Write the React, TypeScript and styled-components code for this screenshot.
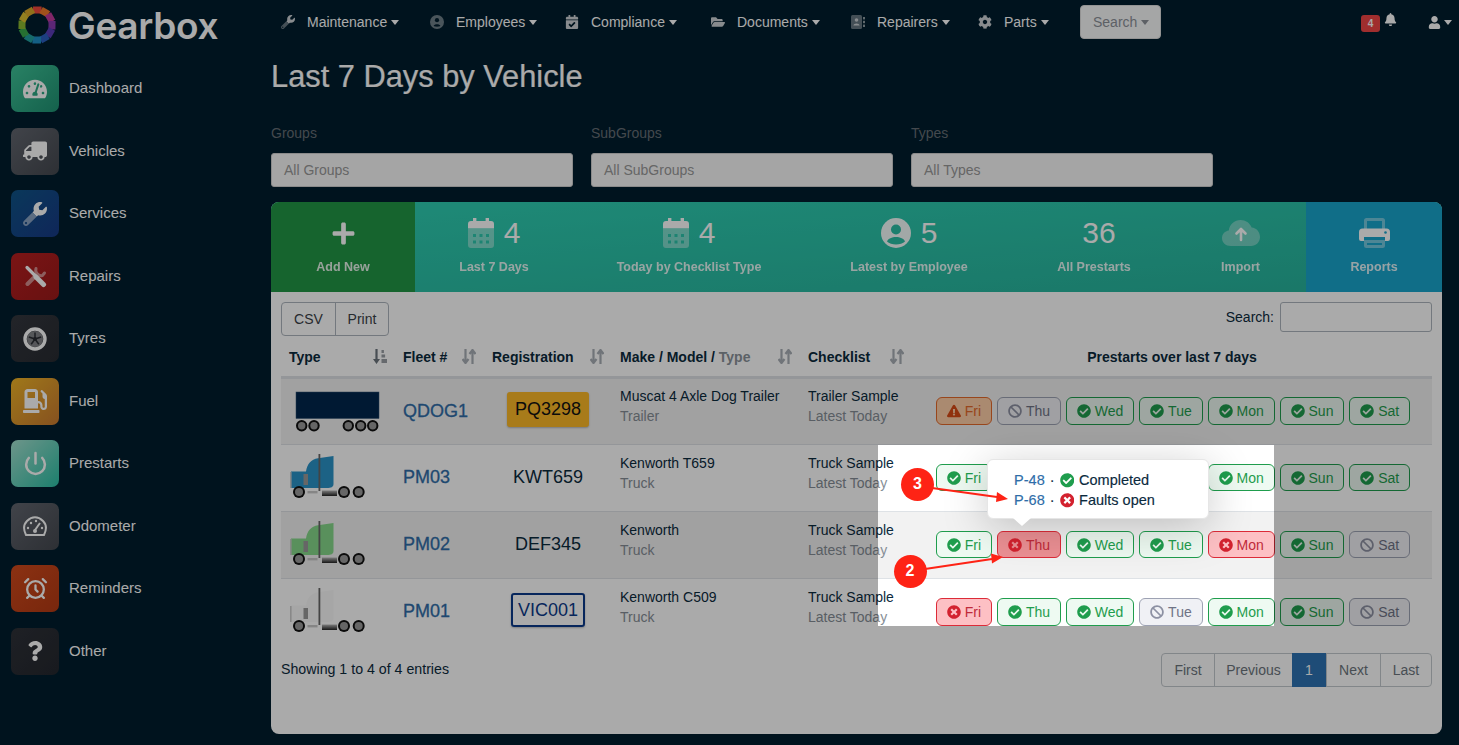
import React from 'react';
import styled, { createGlobalStyle } from 'styled-components';
import {
  FaTachometerAlt,
  FaTruck,
  FaWrench,
  FaGasPump,
  FaQuestion,
  FaCalendarCheck,
  FaFolderOpen,
  FaCog,
  FaBell,
  FaUser,
  FaPlus,
  FaCheckCircle,
  FaTimesCircle,
  FaBan,
  FaExclamationTriangle,
} from 'react-icons/fa';
import { AlarmClock, Power } from 'lucide-react';

const GlobalStyle = createGlobalStyle`
  html, body {
    margin: 0;
    padding: 0;
    background: #001d2d;
    font-family: "Liberation Sans", Arial, sans-serif;
    font-size: 14px;
    color: #0b2a3d;
  }
  * { box-sizing: border-box; }
`;

const Page = styled.div`
  position: relative;
  display: flex;
  width: 1459px;
  height: 745px;
  overflow: hidden;
  background: #001d2d;
`;

/* sidebar */
const Sidebar = styled.aside`
  flex: 0 0 271px;
  padding-left: 11px;
`;

const Brand = styled.div`
  display: flex;
  align-items: center;
  gap: 11px;
  height: 65px;
  padding: 0 0 15px 6px;
`;

const BrandName = styled.span`
  font-family: "Inter", "Open Sans", sans-serif;
  font-size: 37px;
  font-weight: 600;
  letter-spacing: -0.3px;
  color: #fff;
`;

const Menu = styled.nav`
  display: flex;
  flex-direction: column;
  gap: 15.5px;
`;

const MenuItem = styled.a`
  display: flex;
  align-items: center;
  gap: 10px;
  height: 47px;
  padding-bottom: 2px;
  font-size: 15px;
  color: #fff;
`;

const MenuIcon = styled.span<{ $from: string; $to: string }>`
  display: flex;
  align-items: center;
  justify-content: center;
  flex: 0 0 48px;
  height: 47px;
  margin-bottom: -2px;
  border-radius: 7px;
  color: #fff;
  font-size: 24px;
  background: linear-gradient(135deg, ${p => p.$from}, ${p => p.$to});
`;

const Faded = styled.span`
  display: inline-flex;
  mask-image: linear-gradient(45deg, rgba(0, 0, 0, 0.5) 48%, #000 48%);
`;

const Flipped = styled.span`
  display: inline-flex;
  transform: scaleX(-1);
`;

/* main */
const Main = styled.main`
  flex: 1;
  min-width: 0;
`;

const Topbar = styled.header`
  display: flex;
  align-items: center;
  height: 44px;
  padding: 0 7px 0 10px;
  color: #fff;
`;

const NavGrid = styled.div`
  display: grid;
  grid-template-columns: 149px 135px 146px 140px 127px 102px 81px;
  align-items: center;
`;

const NavItem = styled.a`
  display: flex;
  align-items: center;
  gap: 12px;
  font-size: 14px;
  color: #fff;
`;

const NavIcon = styled.span`
  display: flex;
  justify-content: center;
  width: 14px;
  font-size: 14px;
  color: #fff;
  opacity: 0.8;
`;

const Caret = styled.i`
  display: inline-block;
  margin-left: 4px;
  vertical-align: 2px;
  border-top: 5px solid currentColor;
  border-left: 4.5px solid transparent;
  border-right: 4.5px solid transparent;
`;

const SearchButton = styled.button`
  display: flex;
  align-items: center;
  width: 81px;
  height: 34px;
  padding: 0 12px;
  font: inherit;
  font-size: 14px;
  color: #8c9198;
  background: #f8f9fa;
  border: 1px solid #ddd;
  border-radius: 4px;
`;

const TopRight = styled.div`
  display: flex;
  align-items: center;
  margin-left: auto;
`;

const Badge = styled.span`
  display: flex;
  align-items: center;
  justify-content: center;
  width: 19px;
  height: 17px;
  margin-top: 3px;
  border-radius: 3px;
  font-size: 10px;
  font-weight: bold;
  color: #fff;
  background: #f04545;
`;

const BellIcon = styled.span`
  display: flex;
  margin: -6px 31px 0 4px;
  font-size: 13px;
`;

const Content = styled.div`
  margin-right: 17px;
`;

const Title = styled.h1`
  margin: 15px 0 0;
  font-size: 30.8px;
  font-weight: normal;
  line-height: 36px;
  color: #fff;
  -webkit-text-stroke: 0.2px #fff;
`;

const Filters = styled.div`
  display: grid;
  grid-template-columns: repeat(3, 302px);
  gap: 18px;
  margin-top: 28px;
`;

const FilterLabel = styled.label`
  display: block;
  margin-bottom: 9px;
  font-size: 14px;
  line-height: 21px;
  color: #666e75;
`;

const FilterBox = styled.div`
  display: flex;
  align-items: center;
  height: 34px;
  padding: 0 12px;
  font-size: 14px;
  color: #999;
  background: #f8f8f8;
  border: 1px solid #d0d0d0;
  border-radius: 3px;
`;

const Card = styled.section`
  height: 532px;
  margin-top: 15px;
  overflow: hidden;
  background: #fff;
  border-radius: 8px;
`;

const Tiles = styled.div`
  display: grid;
  grid-template-columns: 144px 158px 232px 208px 162px 131px 136px;
  height: 90px;
  background: linear-gradient(175deg, #2ed0b4, #27b29b);
`;

const Tile = styled.a<{ $bg?: string }>`
  display: flex;
  flex-direction: column;
  align-items: center;
  padding-top: 16px;
  color: #fff;
  background: ${p => p.$bg || 'transparent'};
`;

const TileTop = styled.div`
  display: flex;
  align-items: center;
  justify-content: center;
  gap: 10px;
  height: 30px;
`;

const TileNumber = styled.span<{ $nudge?: number }>`
  margin-left: ${p => p.$nudge || 0}px;
  font-size: 30px;
  line-height: 30px;
`;

const TileLabel = styled.span`
  margin-top: 11px;
  font-size: 12.5px;
  font-weight: bold;
  line-height: 16px;
  opacity: 0.88;
`;

const CardBody = styled.div`
  padding: 10px;
`;

const Toolbar = styled.div`
  display: flex;
  justify-content: space-between;
  align-items: flex-start;
  height: 36px;
`;

const ButtonGroup = styled.div`
  display: flex;
  height: 34px;
  border: 1px solid #adb5bd;
  border-radius: 4px;
`;

const GroupButton = styled.button`
  width: 53px;
  padding: 0;
  font: inherit;
  font-size: 14px;
  color: #3b4147;
  background: transparent;
  border: 0;
  & + & { border-left: 1px solid #adb5bd; }
`;

const SearchLabel = styled.label`
  display: flex;
  align-items: center;
  gap: 6px;
  font-size: 14px;
`;

const SearchInput = styled.div`
  width: 152px;
  height: 30px;
  border: 1px solid #adb5bd;
  border-radius: 3px;
`;

const Table = styled.table`
  width: 1151px;
  table-layout: fixed;
  border-collapse: collapse;
`;

const HeadCell = styled.th<{ $center?: boolean }>`
  height: 39px;
  padding: 0 8px;
  font-size: 14px;
  text-align: ${p => (p.$center ? 'center' : 'left')};
  border-bottom: 3px solid #dee2e6;
`;

const HeadInner = styled.div`
  display: flex;
  align-items: center;
  justify-content: space-between;
`;

const Muted = styled.span`
  color: #8a929a;
`;

const Row = styled.tr<{ $striped?: boolean }>`
  height: 67px;
  background: ${p => (p.$striped ? 'rgba(0, 0, 0, 0.05)' : 'transparent')};
  border-bottom: 1px solid #dee2e6;
  &:last-child { border-bottom: 0; }
`;

const Cell = styled.td`
  padding: 0 8px;
  vertical-align: middle;
`;

const TypeCell = styled(Cell)`
  padding: 0 0 0 8px;
  & > svg { display: block; }
`;

const PlateCell = styled(Cell)`
  padding: 0;
  text-align: center;
`;

const FleetLink = styled.a`
  font-size: 18px;
  color: #2f6da8;
  -webkit-text-stroke: 0.3px #2f6da8;
`;

const Plate = styled.span<{ $variant?: 'yellow' | 'vic' }>`
  display: inline-block;
  margin-bottom: ${p => (p.$variant ? '4px' : '0')};
  font-size: 18px;
  line-height: ${p => (p.$variant === 'yellow' ? '31px' : p.$variant === 'vic' ? '30px' : '35px')};
  padding: 0 ${p => (p.$variant === 'yellow' ? '6px' : '5px')};
  border-radius: 3px;
  color: ${p => (p.$variant === 'vic' ? '#0b3a8a' : p.$variant === 'yellow' ? '#111' : '#0b2a3d')};
  background: ${p => (p.$variant === 'yellow' ? '#fcb927' : 'transparent')};
  border: ${p => (p.$variant === 'vic' ? '2px solid #0b3a8a' : p.$variant === 'yellow' ? '2px solid #fcb927' : '0')};
  box-shadow: ${p => (p.$variant ? '0 1px 2px rgba(0, 0, 0, 0.25)' : 'none')};
`;

const TwoLine = styled.div`
  margin-bottom: 10px;
  line-height: 20px;
  font-size: 14px;
  white-space: nowrap;
`;

const SubLine = styled.div`
  color: #868e96;
`;

const Pills = styled.div`
  display: flex;
  justify-content: center;
  gap: 5.2px;
  margin-left: 2px;
`;

type Status = 'ok' | 'fault' | 'off' | 'warn';

const pillColors: Record<Status, { bg: string; border: string; text: string; icon: string }> = {
  ok: { bg: '#eefaf2', border: '#1f9d4d', text: '#1f9d4d', icon: '#1f9d4d' },
  fault: { bg: '#fdc0c4', border: '#dc2b38', text: '#c02b3a', icon: '#d3222f' },
  off: { bg: '#f0f1f5', border: '#9da2b3', text: '#6f7385', icon: '#8d91a3' },
  warn: { bg: '#ffcfa8', border: '#e5692a', text: '#e5692a', icon: '#d94a16' },
};

const Pill = styled.span<{ $status: Status; $active?: boolean }>`
  position: relative;
  display: inline-flex;
  align-items: center;
  gap: 4px;
  height: 27.5px;
  padding: 0 9.8px;
  font-size: 14px;
  border-radius: 6px;
  color: ${p => pillColors[p.$status].text};
  background: ${p => (p.$active ? '#ec9094' : pillColors[p.$status].bg)};
  border: 1px solid ${p => pillColors[p.$status].border};
  & > svg { color: ${p => pillColors[p.$status].icon}; font-size: 14px; }
`;

const Tooltip = styled.div`
  position: absolute;
  left: -11px;
  bottom: 38px;
  z-index: 2;
  width: 222px;
  height: 60px;
  padding: 10px 0 0 26px;
  color: #0b2a3d;
  background: #fff;
  border: 1px solid #e6e6e6;
  border-radius: 6px;
  box-shadow: 0 8px 45px rgba(0, 0, 0, 0.22);
  &::after {
    content: '';
    position: absolute;
    left: 25px;
    top: 100%;
    border-top: 8px solid #fff;
    border-left: 9px solid transparent;
    border-right: 9px solid transparent;
  }
`;

const TipLine = styled.div`
  display: flex;
  align-items: center;
  gap: 5px;
  height: 20px;
  font-size: 14.5px;
  white-space: nowrap;
  -webkit-text-stroke: 0.15px currentColor;
  & > a { color: #2f6da8; }
`;

const Foot = styled.div`
  display: flex;
  justify-content: space-between;
  align-items: center;
  margin-top: 8px;
  font-size: 14px;
`;

const Entries = styled.span`
  padding-bottom: 2px;
  font-size: 14.2px;
`;

const Pager = styled.div`
  display: flex;
  height: 34px;
  border: 1px solid #c4c9ce;
  border-radius: 4px;
`;

const PageLink = styled.a<{ $active?: boolean; $w: number }>`
  display: flex;
  align-items: center;
  justify-content: center;
  width: ${p => p.$w}px;
  margin: ${p => (p.$active ? '-1px 0' : '0')};
  color: ${p => (p.$active ? '#fff' : '#6c757d')};
  background: ${p => (p.$active ? '#2d73b3' : 'transparent')};
  border-left: ${p => (p.$active ? '0' : '1px solid #c4c9ce')};
  &:first-child { border-left: 0; }
`;

/* dimmed page with a lit window, and the numbered callouts on top of it */
const Spotlight = styled.div`
  position: absolute;
  left: 878px;
  top: 445px;
  width: 396px;
  height: 181px;
  z-index: 5;
  pointer-events: none;
  box-shadow: 0 0 0 2000px rgba(0, 0, 0, 0.335);
`;

const Callouts = styled.svg`
  position: absolute;
  left: 0;
  top: 0;
  z-index: 6;
  pointer-events: none;
`;

const Marker = styled.span<{ $x: number; $y: number }>`
  position: absolute;
  left: ${p => p.$x - 16.5}px;
  top: ${p => p.$y - 16.5}px;
  z-index: 7;
  display: flex;
  align-items: center;
  justify-content: center;
  width: 33px;
  height: 33px;
  border-radius: 50%;
  font-size: 16px;
  font-weight: bold;
  color: #fff;
  background: #fe2315;
`;

const Logo = () => {
  const colors = ['#f0483c', '#f07a2a', '#c03a9c', '#8a3ab0', '#5a3db8', '#2a5fc0', '#1f8fc8', '#22a0a0', '#3aa84c', '#8ab830', '#dcc030', '#d8a82a'];
  return (
    <svg width="40" height="40" viewBox="-20 -20 40 40">
      {colors.map((c, i) => {
        const a0 = ((i * 30 - 105) * Math.PI) / 180;
        const a1 = ((i * 30 - 73) * Math.PI) / 180;
        const r = 15.6;
        return (
          <path
            key={i}
            d={`M${r * Math.cos(a0)} ${r * Math.sin(a0)} L${r * Math.cos(a1)} ${r * Math.sin(a1)}`}
            stroke={c}
            strokeWidth="7"
            fill="none"
          />
        );
      })}
    </svg>
  );
};

const RepairsIcon = () => (
  <svg width="24" height="24" viewBox="0 0 24 24" fill="none" stroke="#fff" strokeLinecap="round">
    <g opacity="0.5">
      <path d="M4.5 20 L14 10.5" strokeWidth="4" />
      <path d="M13 4.5 A5.5 5.5 0 0 0 19.5 11.5 L21.5 9" strokeWidth="3" />
    </g>
    <path d="M4 3.5 L12 11.5" strokeWidth="3.2" />
    <path d="M13 13 L20.5 20.5" strokeWidth="5" />
  </svg>
);

const TyreIcon = () => (
  <svg width="24" height="24" viewBox="0 0 24 24">
    <circle cx="12" cy="12" r="10" fill="none" stroke="#fff" strokeWidth="3.4" />
    <circle cx="12" cy="12" r="8" fill="#fff" opacity="0.4" />
    <circle cx="12" cy="12" r="2" fill="#2a2d33" />
    {[0, 72, 144, 216, 288].map(a => (
      <path key={a} d="M12 12 V5.5" stroke="#2a2d33" strokeWidth="1.5" transform={`rotate(${a} 12 12)`} />
    ))}
  </svg>
);

const OdometerIcon = () => (
  <svg width="26" height="22" viewBox="0 0 26 22" fill="none" stroke="#fff" strokeWidth="2">
    <path d="M4 20 C1 14 1 10 5 6 C10 1 16 1 21 6 C25 10 25 14 22 20 Z" strokeLinejoin="round" />
    <path d="M13 15 L18 8" />
    <circle cx="13" cy="16" r="2" fill="#fff" stroke="none" />
    <circle cx="6" cy="13" r="1.2" fill="#fff" stroke="none" />
    <circle cx="9" cy="8" r="1.2" fill="#fff" stroke="none" />
    <circle cx="14" cy="6" r="1.2" fill="#fff" stroke="none" />
    <circle cx="20" cy="13" r="1.2" fill="#fff" stroke="none" />
  </svg>
);

const EmployeeNavIcon = () => (
  <svg width="14" height="14" viewBox="0 0 14 14">
    <circle cx="7" cy="7" r="7" fill="#fff" opacity="0.55" />
    <circle cx="7" cy="5.2" r="2.1" fill="#001d2d" />
    <path d="M3.6 10.8 C4.2 8.6 9.8 8.6 10.4 10.8 C9 12 5 12 3.6 10.8 Z" fill="#001d2d" />
  </svg>
);

const RepairersNavIcon = () => (
  <svg width="14" height="14" viewBox="0 0 14 14" fill="#fff">
    <rect x="0" y="0" width="11" height="14" rx="1.5" opacity="0.5" />
    <circle cx="5.5" cy="5" r="1.8" />
    <path d="M2.4 10.5 C2.6 7.8 8.4 7.8 8.6 10.5 Z" />
    <rect x="12" y="2" width="2" height="2.4" opacity="0.7" />
    <rect x="12" y="5.8" width="2" height="2.4" opacity="0.7" />
    <rect x="12" y="9.6" width="2" height="2.4" opacity="0.7" />
  </svg>
);

const CalendarIcon = () => {
  const holes: string[] = [];
  [16, 22.5].forEach(y => {
    [5, 11.5, 18].forEach(x => {
      holes.push(`M${x} ${y}h3v3h-3z`);
    });
  });
  return (
    <svg width="26" height="30" viewBox="0 0 26 30" fill="#fff">
      <path d="M5 0h3.4v3H17.6V0H21v3h2a3 3 0 0 1 3 3v4.5H0V6a3 3 0 0 1 3-3h2z" />
      <path
        fillRule="evenodd"
        opacity="0.4"
        d={`M0 11h26v16a3 3 0 0 1-3 3H3a3 3 0 0 1-3-3z${holes.join('')}`}
      />
    </svg>
  );
};

const PersonCircleIcon = () => (
  <svg width="30" height="30" viewBox="0 0 30 30">
    <circle cx="15" cy="15" r="15" fill="#fff" opacity="0.95" />
    <circle cx="15" cy="11.5" r="5" fill="#2bbfa5" />
    <path d="M6 23.5 C8 17.5 22 17.5 24 23.5 C20 27.5 10 27.5 6 23.5 Z" fill="#2bbfa5" />
  </svg>
);

const CloudIcon = () => (
  <svg width="38" height="26" viewBox="0 0 38 26">
    <path
      fill="#fff"
      opacity="0.35"
      d="M9 26 C3.5 26 0 22.5 0 18 C0 14 3 11 6.8 10.4 C7.5 4.5 12.5 0 18.6 0 C23.6 0 27.8 3 29.6 7.4 C34.5 7.8 38 11.8 38 17 C38 22 34 26 29 26 Z"
    />
    <path
      d="M19 20 V9 M14.5 13.5 L19 9 L23.5 13.5"
      fill="none"
      stroke="#fff"
      strokeWidth="2.6"
      strokeLinecap="round"
      strokeLinejoin="round"
    />
  </svg>
);

const PrinterIcon = () => (
  <svg width="31" height="30" viewBox="0 0 31 30">
    <path
      fill="#fff"
      opacity="0.4"
      d="M5 2.5 A2.5 2.5 0 0 1 7.5 0 H23.5 A2.5 2.5 0 0 1 26 2.5 V11 H23 V3 H8 V11 H5 Z M5 22 H26 V27.5 A2.5 2.5 0 0 1 23.5 30 H7.5 A2.5 2.5 0 0 1 5 27.5 Z M8 25 V27 H23 V25 Z"
    />
    <path
      fill="#fff"
      d="M3.5 10.5 H27.5 A3.5 3.5 0 0 1 31 14 V21 A2 2 0 0 1 29 23 H26 V19 H5 V23 H2 A2 2 0 0 1 0 21 V14 A3.5 3.5 0 0 1 3.5 10.5 Z"
    />
    <circle cx="26.5" cy="14.5" r="1.3" fill="#18a5cc" />
  </svg>
);

const SortIcon = () => (
  <svg width="14" height="15" viewBox="0 0 14 15" fill="none" stroke="#a9afb6" strokeWidth="2.2">
    <path d="M3.5 0 V13 M0.5 10 L3.5 14 L6.5 10" />
    <path d="M10.5 15 V2 M7.5 5 L10.5 1 L13.5 5" />
  </svg>
);

const SortActiveIcon = () => (
  <svg width="14" height="15" viewBox="0 0 14 15" fill="#6d757d">
    <path d="M2.4 0 H4.6 V10 H7 L3.5 15 L0 10 H2.4 Z" />
    <rect x="8.5" y="1" width="2.4" height="3" opacity="0.7" />
    <rect x="8.5" y="5.5" width="3.6" height="3" opacity="0.7" />
    <rect x="8.5" y="10" width="5.5" height="4" opacity="0.7" />
  </svg>
);

const Wheel = ({ x, y, r = 6 }: { x: number; y: number; r?: number }) => (
  <g>
    <circle cx={x} cy={y} r={r} fill="#111" />
    <circle cx={x} cy={y} r={r - 2} fill="#9a9a9a" />
  </g>
);

const TrailerImage = () => (
  <svg width="96" height="50" viewBox="0 0 96 50">
    <rect x="7" y="6" width="83" height="26.5" fill="#00264d" stroke="#3a5a7a" strokeWidth="0.5" />
    {[12.7, 25, 59.3, 71.7, 83.7].map(x => (
      <Wheel key={x} x={x} y={39.7} r={5.7} />
    ))}
  </svg>
);

const TruckImage = ({ color }: { color: string }) => (
  <svg width="96" height="50" viewBox="0 0 96 50">
    <defs>
      <linearGradient id="tank" x1="0" y1="0" x2="0" y2="1">
        <stop offset="0" stopColor="#bbb" />
        <stop offset="1" stopColor="#222" />
      </linearGradient>
    </defs>
    <path d="M2 18.5 H17 C18 11 22 6.5 29 5.3 L44.5 3 V31 C44.5 34 42 35 38 35 H2 Z" fill={color} />
    <rect x="1" y="19" width="1.6" height="16" fill="#ccc" />
    <rect x="14.5" y="21" width="4.5" height="11" fill="#999" />
    <rect x="29.5" y="1" width="1.8" height="37" fill="#666" />
    <rect x="18.5" y="38" width="10" height="2.4" fill="#c8c8c8" />
    <rect x="33" y="37.5" width="15" height="5.5" fill="url(#tank)" />
    <Wheel x={10} y={39} />
    <Wheel x={55} y={39} />
    <Wheel x={69.7} y={39} />
  </svg>
);

type Day = { day: string; status: Status };

const days = ['Fri', 'Thu', 'Wed', 'Tue', 'Mon', 'Sun', 'Sat'];
const build = (s: Status[]): Day[] => s.map((status, i) => ({ day: days[i], status }));

const rows = [
  {
    image: <TrailerImage />,
    fleet: 'QDOG1',
    plate: 'PQ3298',
    variant: 'yellow' as const,
    make: 'Muscat 4 Axle Dog Trailer',
    kind: 'Trailer',
    checklist: 'Trailer Sample',
    pills: build(['warn', 'off', 'ok', 'ok', 'ok', 'ok', 'ok']),
  },
  {
    image: <TruckImage color="#2a93c8" />,
    fleet: 'PM03',
    plate: 'KWT659',
    make: 'Kenworth T659',
    kind: 'Truck',
    checklist: 'Truck Sample',
    pills: build(['ok', 'ok', 'ok', 'ok', 'ok', 'ok', 'ok']),
  },
  {
    image: <TruckImage color="#86d98b" />,
    fleet: 'PM02',
    plate: 'DEF345',
    make: 'Kenworth',
    kind: 'Truck',
    checklist: 'Truck Sample',
    pills: build(['ok', 'fault', 'ok', 'ok', 'fault', 'ok', 'off']),
    tip: true,
  },
  {
    image: <TruckImage color="#fafafa" />,
    fleet: 'PM01',
    plate: 'VIC001',
    variant: 'vic' as const,
    make: 'Kenworth C509',
    kind: 'Truck',
    checklist: 'Truck Sample',
    pills: build(['fault', 'ok', 'ok', 'off', 'ok', 'ok', 'off']),
  },
];

const statusIcon = (s: Status) => {
  if (s === 'ok') return <FaCheckCircle />;
  if (s === 'fault') return <FaTimesCircle />;
  if (s === 'off') return <FaBan />;
  return <FaExclamationTriangle />;
};

const menu = [
  { label: 'Dashboard', from: '#3ec397', to: '#1f9273', icon: <FaTachometerAlt /> },
  { label: 'Vehicles', from: '#62666f', to: '#44484f', icon: <Flipped><FaTruck /></Flipped> },
  { label: 'Services', from: '#0f5488', to: '#173a86', icon: <Faded><FaWrench /></Faded> },
  { label: 'Repairs', from: '#b81f20', to: '#9c1a1a', icon: <RepairsIcon /> },
  { label: 'Tyres', from: '#34373e', to: '#282b31', icon: <TyreIcon /> },
  { label: 'Fuel', from: '#f0b527', to: '#c97a30', icon: <FaGasPump /> },
  { label: 'Prestarts', from: '#a4e0cf', to: '#2bbfa5', icon: <Power size={25} strokeWidth={2.4} /> },
  { label: 'Odometer', from: '#62666f', to: '#44484f', icon: <OdometerIcon /> },
  { label: 'Reminders', from: '#d14a1c', to: '#b43a14', icon: <AlarmClock size={25} strokeWidth={2.2} /> },
  { label: 'Other', from: '#2e3138', to: '#24272e', icon: <FaQuestion size={20} /> },
];

const nav = [
  { label: 'Maintenance', icon: <Faded><FaWrench /></Faded> },
  { label: 'Employees', icon: <EmployeeNavIcon /> },
  { label: 'Compliance', icon: <FaCalendarCheck /> },
  { label: 'Documents', icon: <FaFolderOpen size={16} /> },
  { label: 'Repairers', icon: <RepairersNavIcon /> },
  { label: 'Parts', icon: <FaCog /> },
];

const App: React.FC = () => {
  return (
    <Page>
      <GlobalStyle />
      <Sidebar>
        <Brand>
          <Logo />
          <BrandName>Gearbox</BrandName>
        </Brand>
        <Menu>
          {menu.map(m => (
            <MenuItem key={m.label}>
              <MenuIcon $from={m.from} $to={m.to}>{m.icon}</MenuIcon>
              {m.label}
            </MenuItem>
          ))}
        </Menu>
      </Sidebar>

      <Main>
        <Topbar>
          <NavGrid>
            {nav.map(n => (
              <NavItem key={n.label}>
                <NavIcon>{n.icon}</NavIcon>
                <span>{n.label}<Caret /></span>
              </NavItem>
            ))}
            <SearchButton>Search<Caret /></SearchButton>
          </NavGrid>
          <TopRight>
            <Badge>4</Badge>
            <BellIcon><FaBell /></BellIcon>
            <FaUser size={13} />
            <Caret style={{ marginLeft: 3 }} />
          </TopRight>
        </Topbar>

        <Content>
          <Title>Last 7 Days by Vehicle</Title>
          <Filters>
            <div>
              <FilterLabel>Groups</FilterLabel>
              <FilterBox>All Groups</FilterBox>
            </div>
            <div>
              <FilterLabel>SubGroups</FilterLabel>
              <FilterBox>All SubGroups</FilterBox>
            </div>
            <div>
              <FilterLabel>Types</FilterLabel>
              <FilterBox>All Types</FilterBox>
            </div>
          </Filters>

          <Card>
            <Tiles>
              <Tile $bg="#229746">
                <TileTop><FaPlus size={25} /></TileTop>
                <TileLabel>Add New</TileLabel>
              </Tile>
              <Tile>
                <TileTop><CalendarIcon /><TileNumber>4</TileNumber></TileTop>
                <TileLabel>Last 7 Days</TileLabel>
              </Tile>
              <Tile>
                <TileTop><CalendarIcon /><TileNumber>4</TileNumber></TileTop>
                <TileLabel>Today by Checklist Type</TileLabel>
              </Tile>
              <Tile>
                <TileTop><PersonCircleIcon /><TileNumber>5</TileNumber></TileTop>
                <TileLabel>Latest by Employee</TileLabel>
              </Tile>
              <Tile>
                <TileTop><TileNumber $nudge={10}>36</TileNumber></TileTop>
                <TileLabel>All Prestarts</TileLabel>
              </Tile>
              <Tile>
                <TileTop><CloudIcon /></TileTop>
                <TileLabel>Import</TileLabel>
              </Tile>
              <Tile $bg="#18a5cc">
                <TileTop><PrinterIcon /></TileTop>
                <TileLabel>Reports</TileLabel>
              </Tile>
            </Tiles>

            <CardBody>
              <Toolbar>
                <ButtonGroup>
                  <GroupButton>CSV</GroupButton>
                  <GroupButton>Print</GroupButton>
                </ButtonGroup>
                <SearchLabel>Search:<SearchInput /></SearchLabel>
              </Toolbar>

              <Table>
                <colgroup>
                  <col width="114" />
                  <col width="89" />
                  <col width="128" />
                  <col width="188" />
                  <col width="112" />
                  <col width="520" />
                </colgroup>
                <thead>
                  <tr>
                    <HeadCell><HeadInner>Type<SortActiveIcon /></HeadInner></HeadCell>
                    <HeadCell><HeadInner>Fleet #<SortIcon /></HeadInner></HeadCell>
                    <HeadCell><HeadInner>Registration<SortIcon /></HeadInner></HeadCell>
                    <HeadCell><HeadInner><span>Make / Model / <Muted>Type</Muted></span><SortIcon /></HeadInner></HeadCell>
                    <HeadCell><HeadInner>Checklist<SortIcon /></HeadInner></HeadCell>
                    <HeadCell $center>Prestarts over last 7 days</HeadCell>
                  </tr>
                </thead>
                <tbody>
                  {rows.map((r, i) => (
                    <Row key={r.fleet} $striped={i % 2 === 0}>
                      <TypeCell>{r.image}</TypeCell>
                      <Cell><FleetLink>{r.fleet}</FleetLink></Cell>
                      <PlateCell><Plate $variant={r.variant}>{r.plate}</Plate></PlateCell>
                      <Cell>
                        <TwoLine>{r.make}<SubLine>{r.kind}</SubLine></TwoLine>
                      </Cell>
                      <Cell>
                        <TwoLine>{r.checklist}<SubLine>Latest Today</SubLine></TwoLine>
                      </Cell>
                      <Cell>
                        <Pills>
                          {r.pills.map(p => {
                            const open = r.tip && p.day === 'Thu';
                            return (
                              <Pill key={p.day} $status={p.status} $active={open}>
                                {statusIcon(p.status)}
                                {p.day}
                                {open && (
                                  <Tooltip>
                                    <TipLine>
                                      <a>P-48</a>·
                                      <FaCheckCircle color="#1f9d4d" />
                                      Completed
                                    </TipLine>
                                    <TipLine>
                                      <a>P-68</a>·
                                      <FaTimesCircle color="#d3222f" />
                                      Faults open
                                    </TipLine>
                                  </Tooltip>
                                )}
                              </Pill>
                            );
                          })}
                        </Pills>
                      </Cell>
                    </Row>
                  ))}
                </tbody>
              </Table>

              <Foot>
                <Entries>Showing 1 to 4 of 4 entries</Entries>
                <Pager>
                  <PageLink $w={52}>First</PageLink>
                  <PageLink $w={78}>Previous</PageLink>
                  <PageLink $w={34} $active>1</PageLink>
                  <PageLink $w={54}>Next</PageLink>
                  <PageLink $w={51}>Last</PageLink>
                </Pager>
              </Foot>
            </CardBody>
          </Card>
        </Content>
      </Main>

      <Spotlight />
      <Callouts width="1459" height="745" viewBox="0 0 1459 745">
        <path d="M932 488 L997 497" stroke="#fe2315" strokeWidth="2" />
        <path d="M1008 499 L996 502 L997 492 Z" fill="#fe2315" />
        <path d="M925 569 L992 559" stroke="#fe2315" strokeWidth="2" />
        <path d="M1003 557 L992 563.5 L991 553.5 Z" fill="#fe2315" />
      </Callouts>
      <Marker $x={917.5} $y={484}>3</Marker>
      <Marker $x={910} $y={571}>2</Marker>
    </Page>
  );
};

export default App;
